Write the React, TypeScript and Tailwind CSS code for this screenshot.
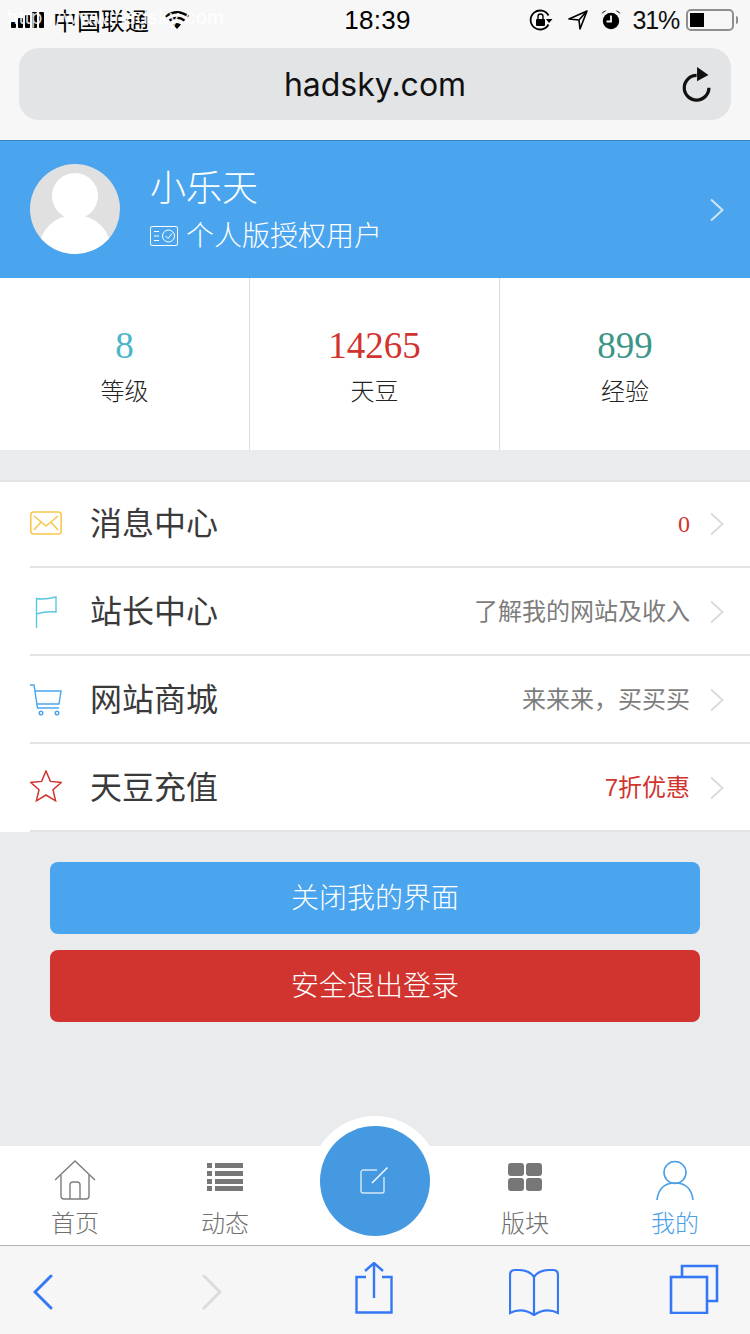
import React from "react";

const CJK = "font-['Inter','Noto_Sans_CJK_SC',sans-serif]";

function Chevron({ color = "#dcdcdc" }: { color?: string }) {
  return (
    <svg width="16" height="24" viewBox="0 0 16 24" fill="none">
      <path d="M2 1.5 L13.5 12 L2 22.5" stroke={color} strokeWidth="2" />
    </svg>
  );
}

function Row({ icon, title, right, rightClass, first }: { icon: React.ReactNode; title: string; right: string; rightClass: string; first?: boolean }) {
  return (
    <div className={`flex h-[88px] bg-white pl-[30px] ${first ? "border-t-2 border-[#e2e3e4]" : ""}`}>
      <div className={`flex flex-1 items-center border-b-2 border-[#e2e3e4] pr-[25px] ${first ? "" : "pt-[2px]"}`}>
        <div className="flex w-[61px] items-center">{icon}</div>
        <span className="ml-[-1px] flex-1 text-[32px] leading-none font-normal text-[#3a3a3a]">{title}</span>
        <span className={`text-[24px] leading-none font-normal ${rightClass}`}>{right}</span>
        <span className="ml-[19px] flex"><Chevron /></span>
      </div>
    </div>
  );
}

function Stat({ value, label, color, border }: { value: string; label: string; color: string; border?: boolean }) {
  return (
    <div className={`flex flex-col items-center pt-[46px] ${border ? "border-r border-[#dcdcdc]" : ""}`}>
      <span className={`font-['Liberation_Serif',serif] text-[37px] leading-[44px] ${color}`}>{value}</span>
      <span className="mt-[6px] text-[24px] leading-[36px] font-light text-[#222]">{label}</span>
    </div>
  );
}

function Tab({ icon, label, active, offset }: { icon: React.ReactNode; label?: string; active?: boolean; offset?: boolean }) {
  return (
    <div className="flex flex-col items-center pt-[14px]">
      <div className={`flex h-[40px] items-start justify-center ${offset ? "pt-[2px]" : ""}`}>{icon}</div>
      {label && <span className={`mt-[6px] text-[24px] leading-[36px] font-light ${active ? "text-[#4a9fe6]" : "text-[#6f6f6f]"}`}>{label}</span>}
    </div>
  );
}

export default function App() {
  return (
    <div className={`relative flex h-[1334px] w-[750px] flex-col overflow-hidden bg-[#e9ebed] ${CJK}`}>
      {/* Browser chrome */}
      <div className="relative bg-[#f7f7f7] h-[141px] border-b border-[#3a85c8]">
        <div className="flex h-[40px] items-center justify-between pl-[11px] pr-[12px] font-['Liberation_Sans','Noto_Sans_CJK_SC',sans-serif] text-black">
          <div className="flex w-[250px] items-center">
            <svg width="34" height="18" viewBox="0 0 34 18" fill="#000">
              <rect x="0" y="11" width="5" height="6" rx="1" />
              <rect x="7" y="7" width="5" height="10" rx="1" />
              <rect x="14" y="4" width="5" height="13" rx="1" />
              <rect x="21" y="1" width="5" height="16" rx="1" />
              <rect x="28" y="1" width="5" height="16" rx="1" />
            </svg>
            <span className="ml-[8px] text-[24px] leading-none font-['Noto_Sans_CJK_SC',sans-serif]">中国联通</span>
            <svg className="ml-[15px]" width="26" height="20" viewBox="0 0 26 20" fill="none">
              <path d="M13 19 L9 14.5 Q13 11.5 17 14.5 Z" fill="#000" />
              <path d="M5.5 10.5 Q13 5 20.5 10.5" stroke="#000" strokeWidth="2.4" />
              <path d="M1.5 6.5 Q13 -2 24.5 6.5" stroke="#000" strokeWidth="2.4" />
            </svg>
          </div>
          <span className="ml-[6px] text-[26px] font-medium leading-none tracking-[0.3px]">18:39</span>
          <div className="flex w-[250px] items-center justify-end">
            <svg width="24" height="22" viewBox="0 0 24 22" fill="none">
              <path d="M19.5 6.5 A9.5 9.5 0 1 0 19.5 15.5" stroke="#000" strokeWidth="1.8" />
              <path d="M17 10 L23.5 10 L20 14 Z" fill="#000" />
              <rect x="7" y="10" width="9" height="7" rx="1" fill="#000" />
              <path d="M9 10 V7.5 a2.5 2.5 0 0 1 5 0 V10" stroke="#000" strokeWidth="1.4" />
            </svg>
            <svg className="ml-[15px]" width="20" height="20" viewBox="0 0 20 20" fill="none">
              <path d="M19 1 L1 9 L11 10 L12 19 Z M11 10 L19 1" stroke="#000" strokeWidth="1.6" strokeLinejoin="round" />
            </svg>
            <svg className="ml-[13px]" width="20" height="20" viewBox="0 0 20 20" fill="#000">
              <circle cx="10" cy="11" r="8.2" />
              <path d="M0.5 4 Q2 0.5 5.5 0.5 Z M19.5 4 Q18 0.5 14.5 0.5 Z" />
              <path d="M10 5.5 V11.5 H5.5" stroke="#f7f7f7" strokeWidth="1.8" fill="none" />
            </svg>
            <span className="ml-[12px] text-[25px] leading-none tracking-[-1.2px] text-[#111]">31%</span>
            <div className="ml-[7px] flex h-[22px] w-[48px] items-center rounded-[5px] border-2 border-[#8f8f8f] pl-[2px]">
              <div className="h-[14px] w-[14px] bg-black" />
            </div>
            <div className="ml-[2px] h-[8px] w-[2px] rounded-r bg-[#8f8f8f]" />
          </div>
        </div>
        <div className="relative mx-[19px] mt-[8px] flex h-[72px] items-center justify-center rounded-[20px] bg-[#e3e4e6] pt-[2px]">
          <span className="font-['Inter',sans-serif] text-[32px] leading-none text-[#111]">hadsky.com</span>
          <svg className="absolute right-[17px] top-[18px]" width="32" height="36" viewBox="0 0 32 38" fill="none">
            <path d="M26.5 21 A13 13 0 1 1 13.5 8" stroke="#111" strokeWidth="3.4" transform="translate(1 2)" />
            <path d="M15 1 L27 9.5 L15 16 Z" fill="#111" />
          </svg>
        </div>
        <span className="absolute left-[7px] top-[4px] font-['Inter',sans-serif] text-[19px] leading-[28px] tracking-[0.2px] text-white/85">http://www.hadsky.com</span>
      </div>

      {/* Profile header */}
      <div className="flex h-[137px] items-center bg-[#4aa5ee] pl-[30px] pr-[25px]">
        <div className="relative mb-[1px] h-[90px] w-[90px] overflow-hidden rounded-full bg-[#e0e0e0]">
          <div className="absolute left-[22px] top-[9px] h-[46px] w-[46px] rounded-full bg-white" />
          <div className="absolute left-[9px] top-[51px] h-[70px] w-[72px] rounded-full bg-white" />
        </div>
        <div className="ml-[30px] flex flex-1 flex-col pb-[2px] text-white">
          <span className="text-[36px] leading-[48px] font-light">小乐天</span>
          <div className="mt-[6px] flex items-center">
            <svg width="28" height="22" viewBox="0 0 28 22" fill="none" stroke="#fff" strokeWidth="1">
              <rect x="0.5" y="1.5" width="27" height="19" rx="1.5" />
              <path d="M4 6.5 H9 M4 11 H9 M4 15.5 H9" />
              <circle cx="18.5" cy="11" r="6" />
              <path d="M15.5 11 L18 13.5 L22 8.5" />
            </svg>
            <span className="ml-[8px] text-[28px] leading-[36px] font-light">个人版授权用户</span>
          </div>
        </div>
        <Chevron color="#d5e4f1" />
      </div>

      {/* Stats */}
      <div className="grid h-[172px] grid-cols-3 bg-white">
        <Stat value="8" label="等级" color="text-[#49b6c9]" border />
        <Stat value="14265" label="天豆" color="text-[#d1342e]" border />
        <Stat value="899" label="经验" color="text-[#3c9688]" />
      </div>

      {/* Menu */}
      <div className="mt-[30px]">
        <Row
          first
          title="消息中心"
          right="0"
          rightClass="font-['Liberation_Serif',serif] text-[#d1342e]"
          icon={
            <svg width="32" height="24" viewBox="0 0 32 24" fill="none" stroke="#f8c84e" strokeWidth="1.6" className="mb-[2px]">
              <rect x="0.8" y="1" width="30.4" height="22" rx="3" />
              <path d="M4 5 L16 15 L28 5 M4 19 L11 11 M28 19 L21 11" />
            </svg>
          }
        />
        <Row
          title="站长中心"
          right="了解我的网站及收入"
          rightClass="text-[#7d7d7d]"
          icon={
            <svg width="32" height="32" viewBox="0 0 32 32" fill="none" stroke="#5bc5e0" strokeWidth="1.4">
              <path d="M6.5 32 V2.5 Q14 4 26 1 V16 Q16 15 6.5 18" />
            </svg>
          }
        />
        <Row
          title="网站商城"
          right="来来来，买买买"
          rightClass="text-[#7d7d7d]"
          icon={
            <svg width="32" height="32" viewBox="0 0 32 32" fill="none" stroke="#4aa5ee" strokeWidth="1.4">
              <path d="M0 1 H4 L7.5 24 H29" />
              <path d="M5 7 H31 L29 20 H6.8" />
              <circle cx="11" cy="29" r="1.8" />
              <circle cx="27" cy="29" r="1.8" />
            </svg>
          }
        />
        <Row
          title="天豆充值"
          right="7折优惠"
          rightClass="font-['Liberation_Sans','Noto_Sans_CJK_SC',sans-serif] text-[#d1342e]"
          icon={
            <svg width="32" height="32" viewBox="0 0 32 32" fill="none" stroke="#d1342e" strokeWidth="1.5" className="mb-[4px]">
              <path d="M16 1 L20.4 11.4 L31.4 12.4 L23 19.8 L25.6 30.8 L16 25 L6.4 30.8 L9 19.8 L0.6 12.4 L11.6 11.4 Z" />
            </svg>
          }
        />
      </div>

      {/* Buttons */}
      <div className="flex flex-col gap-[16px] px-[50px] pt-[30px]">
        <div className="flex h-[72px] items-center justify-center rounded-[8px] bg-[#4aa5ee] text-[28px] font-light text-white">关闭我的界面</div>
        <div className="flex h-[72px] items-center justify-center rounded-[8px] bg-[#d1342e] text-[28px] font-light text-white">安全退出登录</div>
      </div>

      <div className="flex-1" />

      {/* Tab bar */}
      <div className="relative grid h-[100px] grid-cols-5 border-b border-[#b4b4b4] bg-white">
        <Tab
          label="首页"
          icon={
            <svg width="42" height="40" viewBox="0 0 42 40" fill="none" stroke="#7d7d7d" strokeWidth="1.4">
              <path d="M1 20 L21 1 L41 20" />
              <path d="M7 15 V36 Q7 39 10 39 H32 Q35 39 35 36 V15" />
              <path d="M16 39 V25 Q16 22 19 22 H23 Q26 22 26 25 V39" />
            </svg>
          }
        />
        <Tab
          offset
          label="动态"
          icon={
            <svg width="38" height="30" viewBox="0 0 38 30" fill="#777">
              <rect x="1" y="1" width="5" height="5" /><rect x="9" y="1" width="28" height="5" />
              <rect x="1" y="9" width="5" height="5" /><rect x="9" y="9" width="28" height="5" />
              <rect x="1" y="17" width="5" height="5" /><rect x="9" y="17" width="28" height="5" />
              <rect x="1" y="24" width="5" height="5" /><rect x="9" y="24" width="28" height="5" />
            </svg>
          }
        />
        <div />
        <Tab
          offset
          label="版块"
          icon={
            <svg width="36" height="30" viewBox="0 0 36 30" fill="#777">
              <rect x="1" y="1" width="16" height="13" rx="3" /><rect x="19" y="1" width="16" height="13" rx="3" />
              <rect x="1" y="16" width="16" height="13" rx="3" /><rect x="19" y="16" width="16" height="13" rx="3" />
            </svg>
          }
        />
        <Tab
          active
          label="我的"
          icon={
            <svg width="38" height="42" viewBox="0 0 38 42" fill="none" stroke="#4a9fe6" strokeWidth="1.6">
              <circle cx="19" cy="12.5" r="11" />
              <path d="M1 40 Q3 23 19 23 Q35 23 37 40" />
            </svg>
          }
        />
        <div className="absolute left-[310px] top-[-30px] flex h-[130px] w-[130px] items-center justify-center rounded-t-full">
          <div className="absolute inset-x-0 top-0 h-[50px] overflow-hidden">
            <div className="h-[130px] w-[130px] rounded-full bg-white" />
          </div>
          <div className="relative flex h-[110px] w-[110px] items-center justify-center rounded-full bg-[#4499e0]">
            <svg width="30" height="30" viewBox="0 0 30 30" fill="none" stroke="#d5e8f8" strokeWidth="1.4">
              <path d="M17 4 H3.5 Q1 4 1 6.5 V25 Q1 27 3.5 27 H22 Q24 27 24 25 V11" />
              <path d="M12 17 L27.5 1.5" stroke="#fff" />
            </svg>
          </div>
        </div>
      </div>

      {/* Safari toolbar */}
      <div className="flex h-[88px] items-center bg-[#f6f6f7] pl-[33px] pt-[4px]">
        <svg width="20" height="36" viewBox="0 0 20 36" fill="none" stroke="#3478f6" strokeWidth="3" strokeLinecap="round">
          <path d="M18 2 L2 18 L18 34" />
        </svg>
        <svg className="ml-[149px]" width="20" height="36" viewBox="0 0 20 36" fill="none" stroke="#dcdcdc" strokeWidth="3" strokeLinecap="round">
          <path d="M2 2 L18 18 L2 34" />
        </svg>
        <svg className="mb-[9px] ml-[133px]" width="38" height="52" viewBox="0 0 38 52" fill="none" stroke="#3478f6" strokeWidth="2.4">
          <path d="M11 15 H1.5 V50.5 H36.5 V15 H27" />
          <path d="M19 36 V2 M10 9 L19 1 L28 9" />
        </svg>
        <svg className="ml-[116px]" width="50" height="48" viewBox="0 0 50 48" fill="none" stroke="#3478f6" strokeWidth="2.2">
          <path d="M25 9 Q20 2 10 2 H6 Q1 2 1 7 V45 Q13 39 25 47 Q37 39 49 45 V7 Q49 2 44 2 H40 Q30 2 25 9 Z M25 9 V47" />
        </svg>
        <svg className="mb-[6px] ml-[110px]" width="50" height="50" viewBox="0 0 50 50" fill="none" stroke="#3478f6" strokeWidth="2.6">
          <rect x="2" y="13" width="36" height="36" />
          <path d="M13 13 V2 H48 V37 H38" />
        </svg>
      </div>
    </div>
  );
}
